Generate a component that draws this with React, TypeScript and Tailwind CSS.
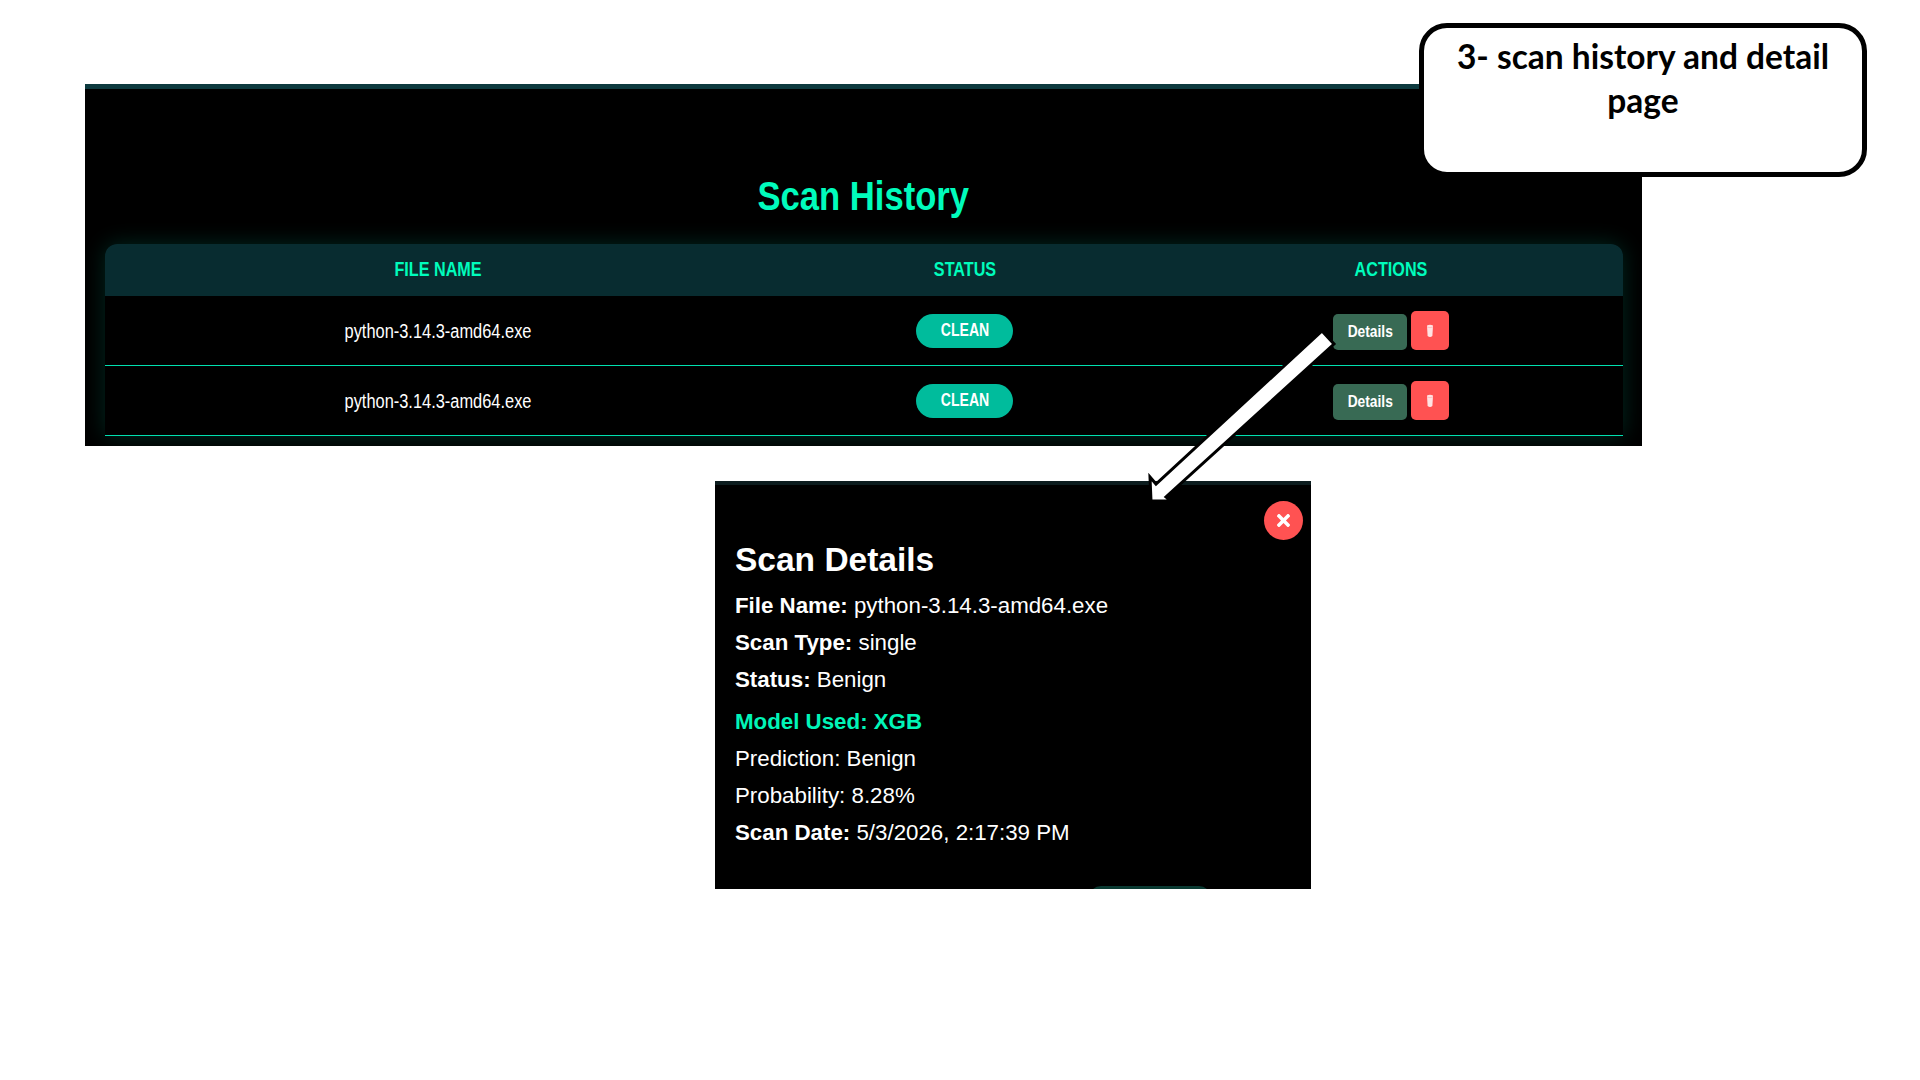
import { FaTimes } from "react-icons/fa";

const scans = [
    { id: 1, name: "python-3.14.3-amd64.exe", status: "CLEAN" },
    { id: 2, name: "python-3.14.3-amd64.exe", status: "CLEAN" },
];

function TrashIcon() {
    return (
        <svg width="8" height="14" viewBox="0 0 8 14">
            <path d="M1 1.5 Q4 0 7 1.5 L6.4 12 Q4 14 1.6 12 Z" fill="#ffe3e3" />
            <path d="M1 3 Q4 4.4 7 3" stroke="#ffb4b4" strokeWidth="0.8" fill="none" />
        </svg>
    );
}

export default function App() {
    return (
        <div className="relative h-[1080px] w-[1920px] overflow-hidden bg-white font-['Liberation_Sans',Arial,sans-serif]">
            <div className="pt-[84px]">
                {/* scan history panel */}
                <div className="ml-[85px] h-[362px] w-[1557px] overflow-hidden border-t-[5px] border-[#0d3a3f] bg-black px-[20px] pt-[84px]">
                    <h1 className="mb-[25px] h-[46px] text-center text-[40px] font-bold leading-[46px] text-[#00fcbc]">
                        <span className="inline-block scale-x-[0.865]">Scan History</span>
                    </h1>
                    <div className="w-[1518px] rounded-t-[12px] shadow-[0_0_22px_rgba(0,255,200,0.16)]">
                        <div className="grid h-[52px] grid-cols-[666px_388px_464px] items-center rounded-t-[12px] bg-[#082c30] pb-[2px] text-center text-[21px] font-bold text-[#00fcbc]">
                            <span className="inline-block scale-x-[0.77]">FILE NAME</span>
                            <span className="inline-block scale-x-[0.77]">STATUS</span>
                            <span className="inline-block scale-x-[0.77]">ACTIONS</span>
                        </div>
                        {scans.map((scan) => (
                            <div
                                key={scan.id}
                                className="grid h-[70px] grid-cols-[666px_388px_464px] items-center border-b border-[#00e0b0] bg-black text-center"
                            >
                                <span className="inline-block scale-x-[0.82] text-[20px] text-white">{scan.name}</span>
                                <div className="flex justify-center pr-[1px]">
                                    <span className="flex h-[34px] w-[97px] items-center justify-center rounded-full bg-[#00bc9c] text-[18px] font-bold text-white">
                                        <span className="inline-block scale-x-[0.78]">{scan.status}</span>
                                    </span>
                                </div>
                                <div className="flex items-end justify-center gap-[4px]">
                                    <button className="flex h-[36px] w-[74px] items-center justify-center rounded-[5px] bg-[#386a54] text-[16px] font-bold text-white">
                                        <span className="inline-block scale-x-[0.86]">Details</span>
                                    </button>
                                    <button className="flex h-[39px] w-[38px] items-center justify-center rounded-[5px] bg-[#ff5252]">
                                        <TrashIcon />
                                    </button>
                                </div>
                            </div>
                        ))}
                    </div>
                </div>

                {/* scan details modal */}
                <div className="relative ml-[715px] mt-[35px] h-[408px] w-[596px] overflow-hidden border-t-4 border-[#0c1c1e] bg-black px-[20px] pt-[54px] text-[22.3px] leading-[37px] text-white">
                    <button className="absolute right-[8px] top-[16px] flex h-[39px] w-[39px] items-center justify-center rounded-full bg-[#ff5252] text-white">
                        <FaTimes size={19} />
                    </button>
                    <h2 className="mb-[7px] text-[33.5px] font-bold leading-[41px]">Scan Details</h2>
                    <p><strong>File Name:</strong> python-3.14.3-amd64.exe</p>
                    <p><strong>Scan Type:</strong> single</p>
                    <p><strong>Status:</strong> Benign</p>
                    <p className="mt-[5px] font-bold text-[#00f5b8]">Model Used: XGB</p>
                    <p>Prediction: Benign</p>
                    <p>Probability: 8.28%</p>
                    <p><strong>Scan Date:</strong> 5/3/2026, 2:17:39 PM</p>
                    <div className="absolute bottom-[-40px] left-[374px] h-[43px] w-[122px] rounded-[12px] bg-[#0a3a32]" />
                </div>
            </div>

            {/* annotation callout */}
            <div className="absolute left-[1419px] top-[23px] h-[154px] w-[448px] rounded-[28px] border-[5px] border-black bg-white pt-[7px] text-center font-['Lato',sans-serif] text-[33.5px] font-bold leading-[43.5px] text-black">
                3- scan history and detail
                <br />
                page
            </div>

            {/* annotation arrow */}
            <svg className="absolute left-0 top-0" width="1920" height="1080">
                <path
                    d="M1322 331 L1334 344 L1166 497 L1171 501 L1151 501 L1150 477 L1156 484 Z"
                    fill="#fff"
                    stroke="#000"
                    strokeWidth="3"
                />
            </svg>
        </div>
    );
}
